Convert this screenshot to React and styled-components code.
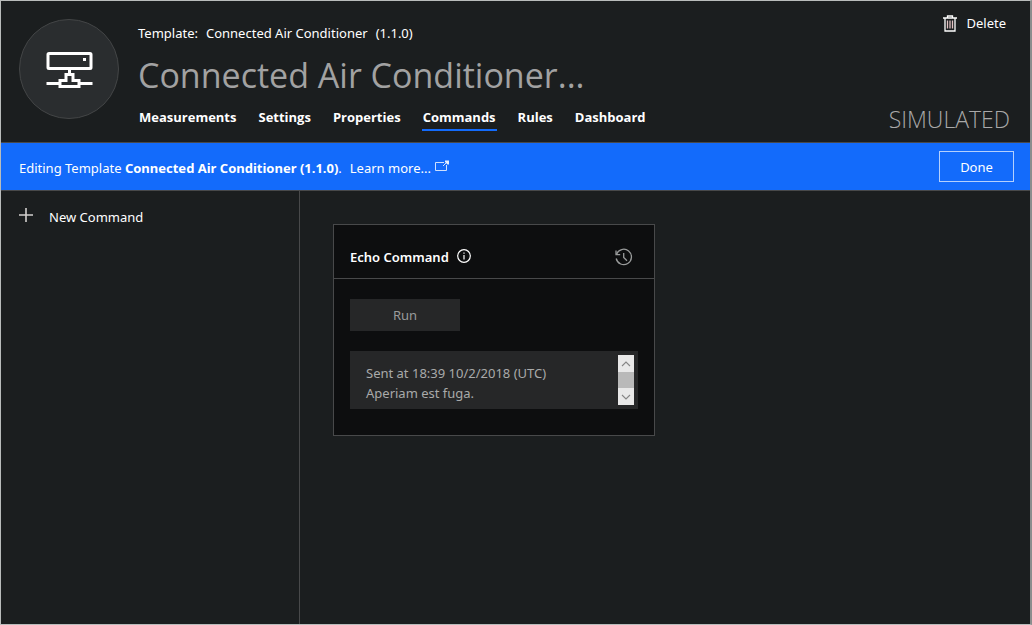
import React from "react";
import styled, { createGlobalStyle } from "styled-components";

const GlobalStyle = createGlobalStyle`
  *, *::before, *::after { box-sizing: border-box; }
  body {
    margin: 0;
    background: #1b1e1f;
    color: #fff;
    font-family: "Noto Sans", "Open Sans", sans-serif;
    font-size: 13px;
    line-height: 20px;
  }
  button { font: inherit; color: inherit; background: none; border: 0; padding: 0; cursor: pointer; }
  svg { display: block; flex: none; }
`;

const Frame = styled.div`
  min-height: 100vh;
  display: flex;
  flex-direction: column;
  border: 1px solid #b9bcbb;
  border-right: 2px solid #8b8d8d;
`;

const Header = styled.header`
  display: flex;
  gap: 19px;
  padding: 18px 20px 11px 18px;
  border-bottom: 1px solid #48494a;
`;

const Avatar = styled.div`
  width: 100px;
  height: 100px;
  flex: none;
  display: grid;
  place-items: center;
  border-radius: 50%;
  border: 1px solid #434546;
  background: #2a2d2f;
`;

const Summary = styled.div`
  flex: 1;
  min-width: 0;
  padding-top: 4px;
`;

const TemplateLine = styled.div`
  display: flex;
  gap: 8px;
`;

const Title = styled.h1`
  margin: 8px 0;
  font-family: "Open Sans", "Noto Sans", sans-serif;
  font-size: 34px;
  line-height: 48px;
  font-weight: 400;
  color: #a2a2a2;
  white-space: nowrap;
`;

const Tabs = styled.nav`
  display: flex;
  gap: 20px;
`;

const Tab = styled.a`
  padding: 0 1px 2px;
  height: 24px;
  color: #fff;
  font-family: "Open Sans", "Noto Sans", sans-serif;
  font-weight: 700;
  text-decoration: none;
  border-bottom: 2px solid ${(p) => (p.$active ? "#136bfb" : "transparent")};
`;

const Actions = styled.div`
  display: flex;
  flex-direction: column;
  justify-content: space-between;
  align-items: flex-end;
`;

const DeleteButton = styled.button`
  display: flex;
  align-items: center;
  gap: 9px;
  margin: -6px 4px 0 0;
`;

const Status = styled.span`
  font-family: "Open Sans", "Noto Sans", sans-serif;
  font-size: 23px;
  line-height: 24px;
  font-weight: 300;
  color: #a9a9a9;
`;

const Banner = styled.section`
  display: flex;
  align-items: center;
  justify-content: space-between;
  height: 48px;
  padding: 0 16px 0 18px;
  background: #136bfb;
  border-bottom: 1px solid #48494a;
`;

const BannerText = styled.p`
  margin: 0;
  padding-top: 2px;
  display: flex;
  gap: 8px;
`;

const LearnMore = styled.a`
  display: flex;
  gap: 4px;
  color: #fff;
  text-decoration: none;
`;

const DoneButton = styled.button`
  width: 75px;
  height: 31px;
  border: 1px solid #b4d0fd;
`;

const Body = styled.div`
  flex: 1;
  display: flex;
`;

const Sidebar = styled.aside`
  width: 299px;
  flex: none;
  padding: 16px 18px;
  border-right: 1px solid #48494a;
`;

const NewCommand = styled.button`
  display: flex;
  gap: 16px;
`;

const Main = styled.main`
  flex: 1;
  padding: 33px;
`;

const Card = styled.article`
  width: 322px;
  background: #0d0e0f;
  border: 1px solid #48494a;
`;

const CardHeader = styled.header`
  display: flex;
  align-items: center;
  justify-content: space-between;
  height: 54px;
  padding: 11px 21px 0 16px;
  border-bottom: 1px solid #48494a;
`;

const CardTitle = styled.h2`
  display: flex;
  gap: 8px;
  margin: 0;
  font-size: 13px;
  line-height: 20px;
  font-weight: 600;
`;

const CardBody = styled.div`
  display: flex;
  flex-direction: column;
  align-items: flex-start;
  gap: 20px;
  padding: 20px 16px 26px;
`;

const RunButton = styled.button`
  width: 110px;
  height: 32px;
  background: #262728;
  color: #999b9b;
`;

const Log = styled.div`
  align-self: stretch;
  display: flex;
  justify-content: space-between;
  padding: 4px 4px 4px 16px;
  background: #262728;
  color: #a9aaaa;
`;

const LogText = styled.p`
  margin: 0;
  padding-top: 8px;
`;

const ScrollBar = styled.div`
  width: 16px;
  height: 50px;
  display: flex;
  flex-direction: column;
  background: #e8e8e8;
`;

const ScrollButton = styled.button`
  flex: 1;
  display: grid;
  place-items: center;
  color: #858585;
`;

const ScrollThumb = styled.div`
  height: 16px;
  background: #b9b9b9;
`;

const DeviceIcon = () => (
  <svg width="48" height="40" viewBox="0 0 48 40" fill="none" stroke="#fff" strokeWidth="3" aria-hidden="true">
    <rect x="3" y="4.500" width="43" height="15" rx="1" />
    <rect x="38" y="9" width="3" height="3" fill="#fff" stroke="none" />
    <path d="M24.500 20v4M1.500 34.500h13M34.500 34.500h13M15 37.500v-6h6v-6h7v6h6v6z" />
  </svg>
);

const TrashIcon = () => (
  <svg width="14" height="17" viewBox="0 0 14 17" fill="none" stroke="#fff" aria-hidden="true">
    <path d="M0 3h14M4.500 2.500V1h5v1.500M2 3v13h10V3" strokeWidth="1.300" />
    <path d="M4.500 5.500v8M7 5.500v8M9.500 5.500v8" stroke="#e3c3c3" strokeWidth="1.300" />
  </svg>
);

const ExternalIcon = () => (
  <svg width="14" height="16" viewBox="0 0 14 16" fill="none" stroke="#cfe0fe" aria-hidden="true">
    <path d="M9 4.500H.5v8h11V7" />
    <path d="M8 8l4.500-4.500" />
    <path d="M10 2.500h4v4h-1.500L11 5l-1-1z" fill="#e4eeff" stroke="none" />
  </svg>
);

const PlusIcon = () => (
  <svg width="14" height="16" viewBox="0 0 14 16" fill="none" stroke="#d2d0ce" strokeWidth="1.600" aria-hidden="true">
    <path d="M0 8h14M7 1v14" />
  </svg>
);

const InfoIcon = () => (
  <svg width="14" height="18" viewBox="0 0 14 18" fill="none" stroke="#fff" aria-hidden="true">
    <circle cx="7" cy="9" r="6.300" strokeWidth="1.200" />
    <path d="M7 8v4.500M7 5.500v1.300" strokeWidth="1.200" />
  </svg>
);

const HistoryIcon = () => (
  <svg width="18" height="18" viewBox="0 0 18 18" fill="none" stroke="#999b9b" strokeWidth="1.300" aria-hidden="true">
    <path d="M1.500 6.300A7.700 7.700 0 1 1 1.200 10.500" />
    <path d="M1 2.500v4.200h4.200" />
    <path d="M8.700 5v4.500l3.300 3.300" />
  </svg>
);

const Chevron = ({ down }) => (
  <svg width="10" height="6" viewBox="0 0 10 6" fill="none" stroke="currentColor" strokeWidth="1.100" aria-hidden="true">
    <path d={down ? "M1 1 5 5 9 1" : "M1 5 5 1 9 5"} />
  </svg>
);

const TABS = ["Measurements", "Settings", "Properties", "Commands", "Rules", "Dashboard"];

export default function App() {
  return (
    <>
      <GlobalStyle />
      <Frame>
        <Header>
          <Avatar><DeviceIcon /></Avatar>
          <Summary>
            <TemplateLine>
              <span>Template:</span>
              <span>Connected Air Conditioner</span>
              <span>(1.1.0)</span>
            </TemplateLine>
            <Title>Connected Air Conditioner...</Title>
            <Tabs>
              {TABS.map((name) => (
                <Tab key={name} href={`#${name.toLowerCase()}`} $active={name === "Commands"}>{name}</Tab>
              ))}
            </Tabs>
          </Summary>
          <Actions>
            <DeleteButton type="button"><TrashIcon />Delete</DeleteButton>
            <Status>SIMULATED</Status>
          </Actions>
        </Header>
        <Banner>
          <BannerText>
            <span>Editing Template <b>Connected Air Conditioner (1.1.0)</b>.</span>
            <LearnMore href="#learn-more">Learn more...<ExternalIcon /></LearnMore>
          </BannerText>
          <DoneButton type="button">Done</DoneButton>
        </Banner>
        <Body>
          <Sidebar>
            <NewCommand type="button"><PlusIcon />New Command</NewCommand>
          </Sidebar>
          <Main>
            <Card>
              <CardHeader>
                <CardTitle>Echo Command<InfoIcon /></CardTitle>
                <button type="button" aria-label="History"><HistoryIcon /></button>
              </CardHeader>
              <CardBody>
                <RunButton type="button">Run</RunButton>
                <Log>
                  <LogText>Sent at 18:39 10/2/2018 (UTC)<br />Aperiam est fuga.</LogText>
                  <ScrollBar>
                    <ScrollButton type="button" aria-label="Scroll up"><Chevron /></ScrollButton>
                    <ScrollThumb />
                    <ScrollButton type="button" aria-label="Scroll down"><Chevron down /></ScrollButton>
                  </ScrollBar>
                </Log>
              </CardBody>
            </Card>
          </Main>
        </Body>
      </Frame>
    </>
  );
}
